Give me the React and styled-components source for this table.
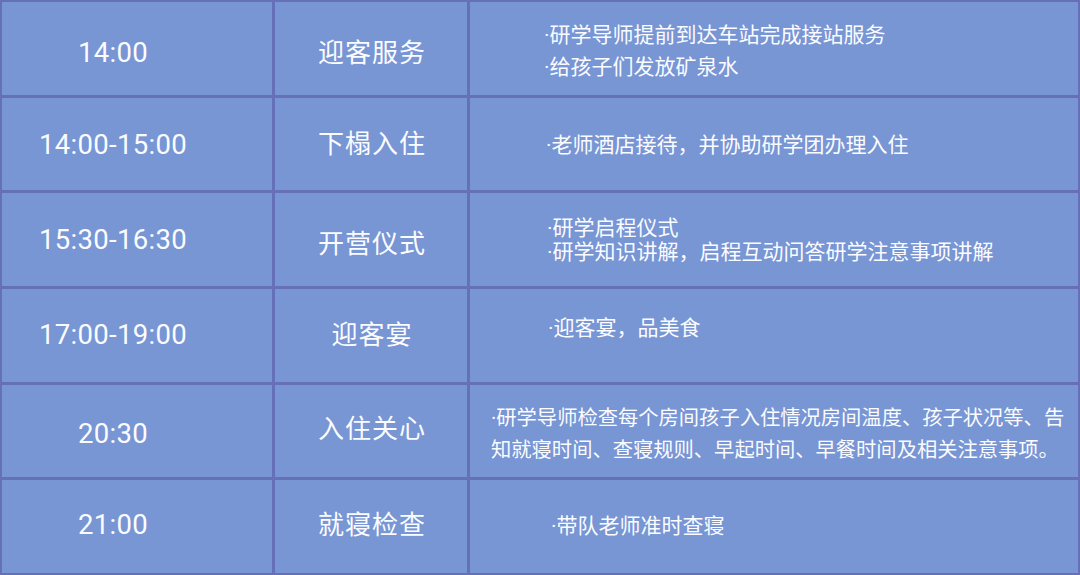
import styled, { createGlobalStyle } from 'styled-components';

const GlobalStyle = createGlobalStyle`
  html, body {
    margin: 0;
    padding: 0;
    background: #6670b8;
  }
`;

// nudge centred text up or down by s px without negative padding
const nudge = (s) => `padding-top: ${Math.max(0, 2 * s)}px; padding-bottom: ${Math.max(0, -2 * s)}px;`;

const Table = styled.div`
  display: grid;
  grid-template-columns: 270px 192px minmax(0, 1fr);
  grid-template-rows: repeat(6, 1fr);
  gap: 3px;
  width: 1080px;
  height: 575px;
  box-sizing: border-box;
  padding: 2px;
  background: #6670b8;
  color: #fbfcff;
`;

const Cell = styled.div`
  display: flex;
  align-items: center;
  box-sizing: border-box;
  background: #7895d4;
`;

const TimeCell = styled(Cell)`
  justify-content: center;
  padding-right: 48px;
  ${(p) => nudge(p.$shift)}
  font-family: Roboto, "Noto Sans", sans-serif;
  font-size: 27.5px;
  letter-spacing: 0.3px;
`;

const TitleCell = styled(Cell)`
  justify-content: center;
  padding-left: 2px;
  ${(p) => nudge(p.$shift)}
  font-family: "Noto Sans CJK SC", sans-serif;
  font-size: 26px;
  letter-spacing: 1px;
`;

const DetailCell = styled(Cell)`
  padding-left: ${(p) => p.$pad}px;
  ${(p) => nudge(p.$shift)}
`;

const Lines = styled.div`
  display: flex;
  flex-direction: column;
  white-space: nowrap;
  font-family: Roboto, "Noto Sans CJK SC", sans-serif;
  font-size: ${(p) => p.$size}px;
  line-height: ${(p) => p.$lh}px;
`;

const rows = [
  {
    time: '14:00',
    title: '迎客服务',
    timeShift: 4,
    titleShift: 2,
    pad: 74,
    size: 21,
    lh: 32,
    shift: 3,
    lines: ['·研学导师提前到达车站完成接站服务', '·给孩子们发放矿泉水'],
  },
  {
    time: '14:00-15:00',
    title: '下榻入住',
    timeShift: 1,
    titleShift: -2,
    pad: 76,
    size: 21,
    lh: 32,
    shift: 1,
    lines: ['·老师酒店接待，并协助研学团办理入住'],
  },
  {
    time: '15:30-16:30',
    title: '开营仪式',
    timeShift: 0,
    titleShift: 2,
    pad: 77,
    size: 21,
    lh: 24,
    shift: 0,
    lines: ['·研学启程仪式', '·研学知识讲解，启程互动问答研学注意事项讲解'],
  },
  {
    time: '17:00-19:00',
    title: '迎客宴',
    timeShift: -1,
    titleShift: -3,
    pad: 78,
    size: 21,
    lh: 32,
    shift: -7,
    lines: ['·迎客宴，品美食'],
  },
  {
    time: '20:30',
    title: '入住关心',
    timeShift: 3,
    titleShift: -4,
    pad: 21,
    size: 20.3,
    lh: 32,
    shift: 3,
    lines: [
      '·研学导师检查每个房间孩子入住情况房间温度、孩子状况等、告',
      '知就寝时间、查寝规则、早起时间、早餐时间及相关注意事项。',
    ],
  },
  {
    time: '21:00',
    title: '就寝检查',
    timeShift: -2,
    titleShift: -4,
    pad: 81,
    size: 21,
    lh: 32,
    shift: -1,
    lines: ['·带队老师准时查寝'],
  },
];

export default function App() {
  return (
    <>
      <GlobalStyle />
      <Table>
        {rows.map((r) => (
          <>
            <TimeCell key={r.time + 't'} $shift={r.timeShift}>
              {r.time}
            </TimeCell>
            <TitleCell key={r.title} $shift={r.titleShift}>
              {r.title}
            </TitleCell>
            <DetailCell key={r.time + 'd'} $pad={r.pad} $shift={r.shift}>
              <Lines $size={r.size} $lh={r.lh}>
                {r.lines.map((l) => (
                  <span key={l}>{l}</span>
                ))}
              </Lines>
            </DetailCell>
          </>
        ))}
      </Table>
    </>
  );
}
